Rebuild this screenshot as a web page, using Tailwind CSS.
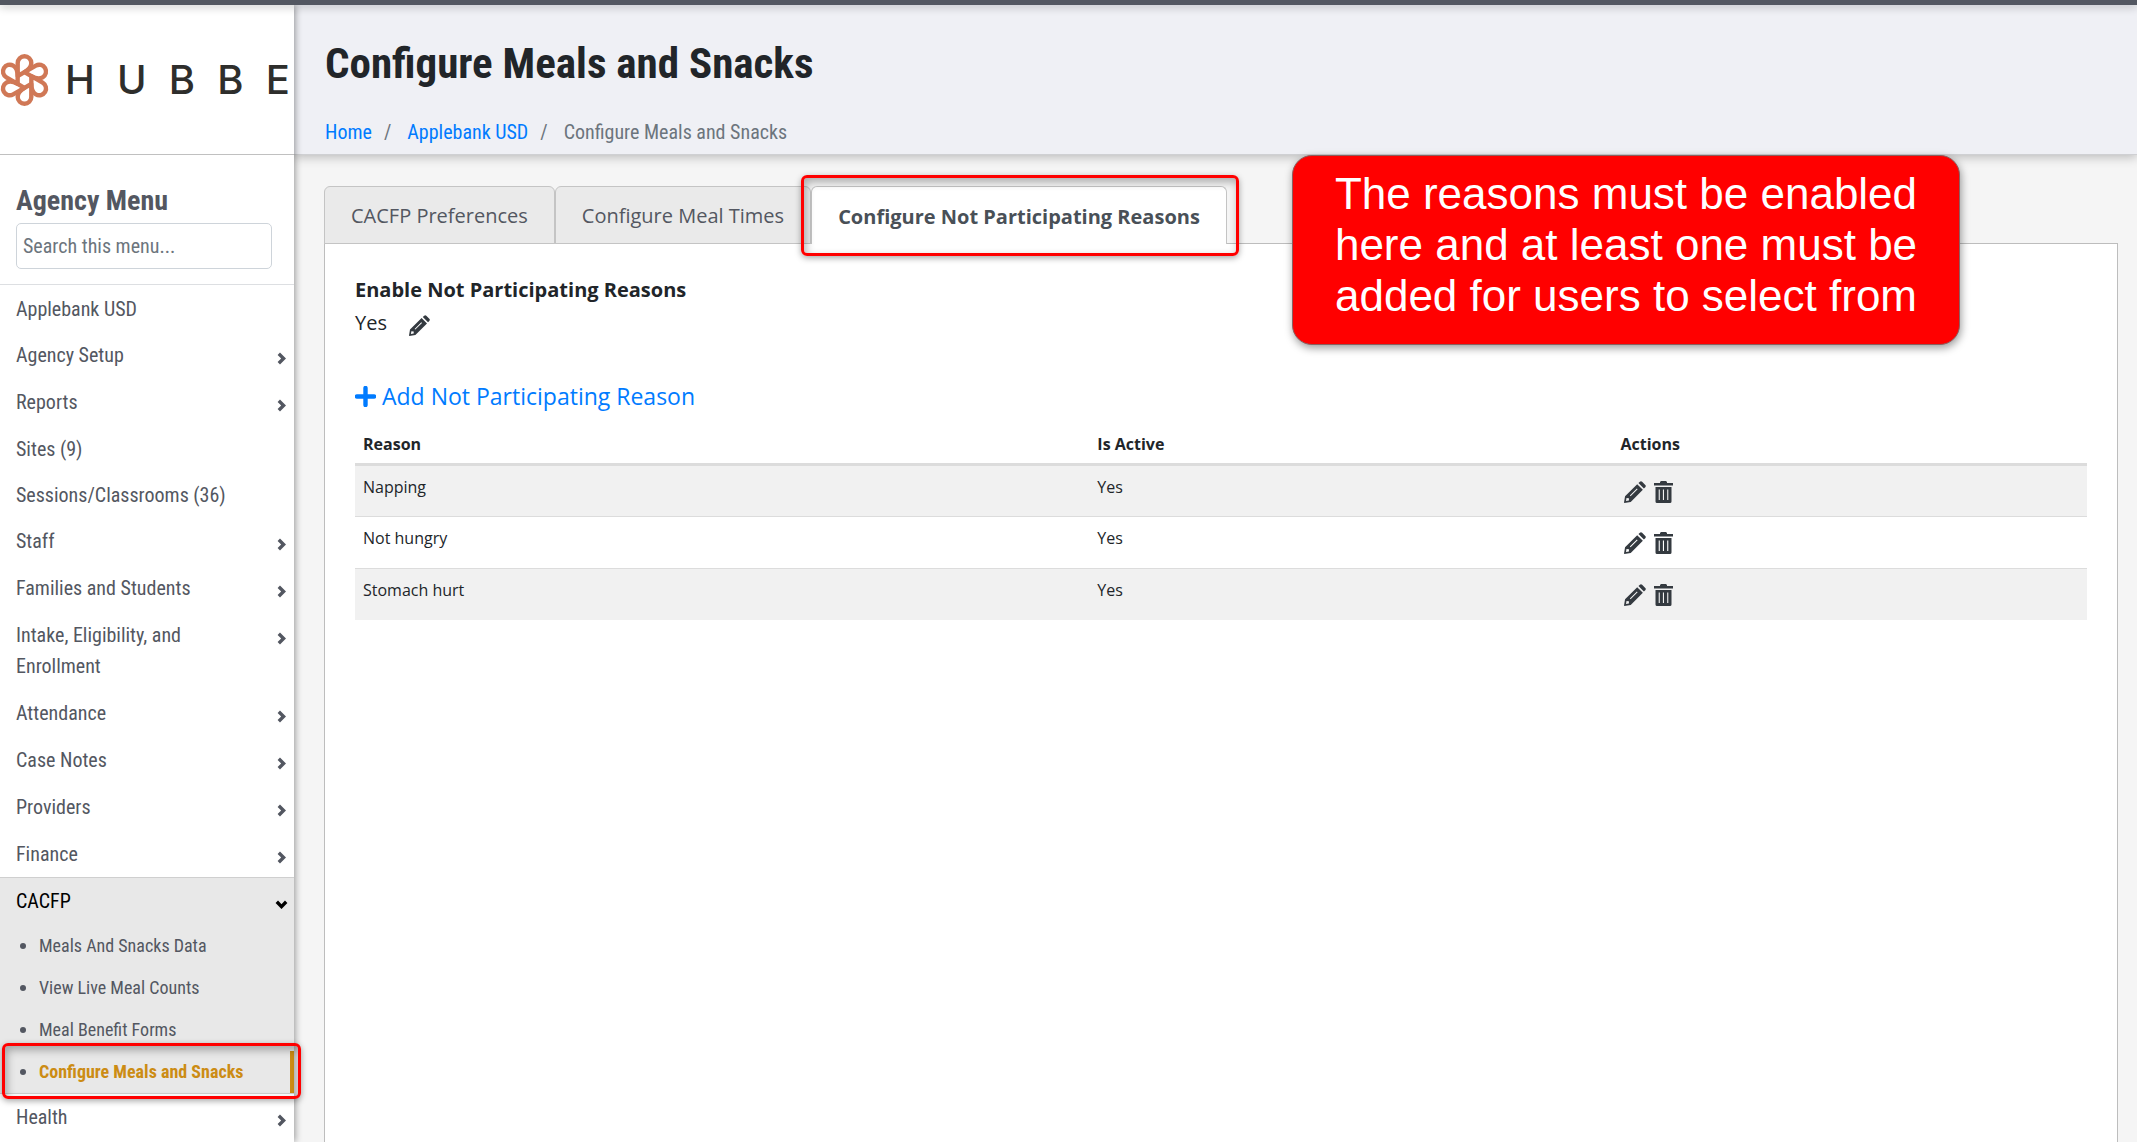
<!DOCTYPE html>
<html lang="en">

<head>
    <meta charset="UTF-8">
    <meta name="viewport" content="width=device-width, initial-scale=1">
    <script src="https://cdn.jsdelivr.net/npm/@tailwindcss/browser@4"></script>
    <title>Configure Meals and Snacks</title>
</head>

<body class="h-screen overflow-hidden flex flex-col bg-[#f5f5f5] text-[#212529] font-['Open_Sans','Noto_Sans',sans-serif]">
    <!-- Icons -->
    <svg class="hidden">
        <symbol id="chevron" viewBox="0 0 9 13">
            <path d="M1.8 1.8 6.6 6.5 1.8 11.2" fill="none" stroke="currentColor" stroke-width="3.4"></path>
        </symbol>
        <symbol id="pencil" viewBox="0 0 21 21">
            <path fill="currentColor" fill-rule="evenodd" d="M12.6 3 18 8.4 6.4 20 0.4 21 0 20.6 1 14.6ZM2.4 16.3 1.9 19.1 4.7 18.6 4.7 16.5 2.4 16.3ZM5.6 13.9 6.3 14.6 13 7.9 12.3 7.2Z"></path>
            <path fill="currentColor" d="M13.8 2 15.2 0.7Q16.2-0.2 17.3 0.7L20.3 3.7Q21.4 4.8 20.3 5.9L19 7.2Z"></path>
        </symbol>
        <symbol id="trash" viewBox="0 0 19 22">
            <path fill="currentColor" d="M6 1 7 0H12L13 1V2H19V4.5H0V2H6Z"></path>
            <path fill="currentColor" fill-rule="evenodd" d="M1.5 6H17.5V20.5Q17.5 22 16 22H3Q1.5 22 1.5 20.5ZM4.7 8.5V19H5.8V8.5ZM8.9 8.5V19H10V8.5ZM13.2 8.5V19H14.3V8.5Z"></path>
        </symbol>
    </svg>

    <div class="h-[5px] shrink-0 bg-[#535761] relative z-20 shadow-[0_2px_8px_rgba(0,0,0,0.25)]"></div>

    <div class="flex flex-1 min-h-0">
        <!-- Sidebar -->
        <aside class="w-[294px] shrink-0 bg-white relative z-10 shadow-[1px_0_7px_rgba(0,0,0,0.4)] text-[#535761] text-[20px] leading-[31px] font-['Roboto_Condensed',Roboto,sans-serif]">
            <div class="h-[150px] border-b border-[#c0c0c0] flex items-center">
                <svg class="w-[49px] h-[64px] shrink-0" viewBox="0 0 49 64">
                    <g fill="none" stroke="#d07856" stroke-width="4.4" stroke-linejoin="round">
                        <path d="M17.7 28V15A6.8 6.8 0 0 1 31.3 15C31.3 19.5 28.5 21.8 24.5 24.1Z"></path>
                        <path transform="rotate(60 24.5 32)" d="M17.7 28V15A6.8 6.8 0 0 1 31.3 15C31.3 19.5 28.5 21.8 24.5 24.1Z"></path>
                        <path transform="rotate(120 24.5 32)" d="M17.7 28V15A6.8 6.8 0 0 1 31.3 15C31.3 19.5 28.5 21.8 24.5 24.1Z"></path>
                        <path transform="rotate(180 24.5 32)" d="M17.7 28V15A6.8 6.8 0 0 1 31.3 15C31.3 19.5 28.5 21.8 24.5 24.1Z"></path>
                        <path transform="rotate(240 24.5 32)" d="M17.7 28V15A6.8 6.8 0 0 1 31.3 15C31.3 19.5 28.5 21.8 24.5 24.1Z"></path>
                        <path transform="rotate(300 24.5 32)" d="M17.7 28V15A6.8 6.8 0 0 1 31.3 15C31.3 19.5 28.5 21.8 24.5 24.1Z"></path>
                    </g>
                </svg>
                <div class="ml-4 mr-1 flex-1 flex justify-between text-[40px] leading-none font-medium text-[#2e2e2c] font-[Inter,sans-serif]">
                    <span>H</span><span>U</span><span>B</span><span>B</span><span>E</span>
                </div>
            </div>

            <div class="px-4 pt-7 pb-[15px] border-b border-[#dddfe2]">
                <h2><label for="menuSearch" class="block text-[28px] leading-[36px] font-bold mb-1">Agency Menu</label></h2>
                <input id="menuSearch" type="text" placeholder="Search this menu..." class="block w-[256px] h-[46px] px-[6px] border border-[#ced4da] rounded-[5px] placeholder:text-[#6c757d]">
            </div>

            <nav class="pt-px">
                <ul>
                    <li><a href="#" class="block px-4 pt-2 pb-[7px]">Applebank USD</a></li>
                    <li><a href="#" class="flex justify-between px-4 py-2 pr-2"><span class="w-[200px]">Agency Setup</span><svg class="w-[9px] h-[13px] mt-3"><use href="#chevron"></use></svg></a></li>
                    <li><a href="#" class="flex justify-between px-4 py-2 pr-2"><span class="w-[200px]">Reports</span><svg class="w-[9px] h-[13px] mt-3"><use href="#chevron"></use></svg></a></li>
                    <li><a href="#" class="block px-4 pt-2 pb-[7px]">Sites (9)</a></li>
                    <li><a href="#" class="block px-4 pt-2 pb-[7px]">Sessions/Classrooms (36)</a></li>
                    <li><a href="#" class="flex justify-between px-4 py-2 pr-2"><span class="w-[200px]">Staff</span><svg class="w-[9px] h-[13px] mt-3"><use href="#chevron"></use></svg></a></li>
                    <li><a href="#" class="flex justify-between px-4 py-2 pr-2"><span class="w-[200px]">Families and Students</span><svg class="w-[9px] h-[13px] mt-3"><use href="#chevron"></use></svg></a></li>
                    <li><a href="#" class="flex justify-between px-4 py-2 pr-2"><span class="w-[200px]">Intake, Eligibility, and Enrollment</span><svg class="w-[9px] h-[13px] mt-3"><use href="#chevron"></use></svg></a></li>
                    <li><a href="#" class="flex justify-between px-4 py-2 pr-2"><span class="w-[200px]">Attendance</span><svg class="w-[9px] h-[13px] mt-3"><use href="#chevron"></use></svg></a></li>
                    <li><a href="#" class="flex justify-between px-4 py-2 pr-2"><span class="w-[200px]">Case Notes</span><svg class="w-[9px] h-[13px] mt-3"><use href="#chevron"></use></svg></a></li>
                    <li><a href="#" class="flex justify-between px-4 py-2 pr-2"><span class="w-[200px]">Providers</span><svg class="w-[9px] h-[13px] mt-3"><use href="#chevron"></use></svg></a></li>
                    <li><a href="#" class="flex justify-between px-4 pt-2 pb-[7px] pr-2"><span class="w-[200px]">Finance</span><svg class="w-[9px] h-[13px] mt-3"><use href="#chevron"></use></svg></a></li>
                    <li class="bg-[#e8e8e8] border-y border-[#cfcfcf]">
                        <a href="#" class="flex justify-between px-4 py-2 pr-2 text-black"><span class="w-[200px]">CACFP</span><svg class="w-[9px] h-[13px] mt-3 rotate-90"><use href="#chevron"></use></svg></a>
                        <ul class="text-[18px] leading-[42px]">
                            <li><a href="#" class="flex items-center pl-5"><span class="w-[6px] h-[6px] rounded-full bg-[#535761] mr-[13px]"></span>Meals And Snacks Data</a></li>
                            <li><a href="#" class="flex items-center pl-5"><span class="w-[6px] h-[6px] rounded-full bg-[#535761] mr-[13px]"></span>View Live Meal Counts</a></li>
                            <li><a href="#" class="flex items-center pl-5"><span class="w-[6px] h-[6px] rounded-full bg-[#535761] mr-[13px]"></span>Meal Benefit Forms</a></li>
                            <li class="relative">
                                <a href="#" class="flex items-center pl-5 border-r-4 border-[#cc8c14] text-[#cc8c14] font-bold"><span class="w-[6px] h-[6px] rounded-full bg-[#535761] mr-[13px]"></span>Configure Meals and Snacks</a>
                                <div class="absolute -top-2 -bottom-[6px] left-[2px] -right-[7px] border-[3px] border-[#ff0000] rounded-[6px] shadow-[0_2px_6px_rgba(0,0,0,0.35),inset_2px_4px_8px_rgba(0,0,0,0.3)] pointer-events-none"></div>
                            </li>
                        </ul>
                    </li>
                    <li><a href="#" class="flex justify-between px-4 py-2 pr-2"><span class="w-[200px]">Health</span><svg class="w-[9px] h-[13px] mt-3"><use href="#chevron"></use></svg></a></li>
                </ul>
            </nav>
        </aside>

        <main class="flex-1 min-w-0 flex flex-col relative">
            <header class="h-[150px] shrink-0 bg-[#eff0f5] border-b border-[#cfd0d3] shadow-[0_2px_10px_rgba(0,0,0,0.25)] px-[31px] pt-7 font-['Roboto_Condensed',Roboto,sans-serif]">
                <h1 class="text-[43px] leading-[60px] font-bold">Configure Meals and Snacks</h1>
                <ol class="flex gap-3 mt-6 text-[20px] leading-[30px] text-[#6c757d]">
                    <li><a href="#" class="text-[#007bff]">Home</a></li>
                    <li class="flex gap-4"><span>/</span><a href="#" class="text-[#007bff]">Applebank USD</a></li>
                    <li class="flex gap-4"><span>/</span>Configure Meals and Snacks</li>
                </ol>
            </header>

            <div class="flex-1 flex flex-col pl-[30px] pr-[19px] pt-[31px]">
                <!-- Tabs -->
                <div class="flex relative z-10 -mb-px text-[20px] leading-[30px] text-[#535761]">
                    <button class="h-[58px] px-[26px] pt-[2px] bg-[#eaeaea] border border-[#c4c4c4] rounded-t-[6px]">CACFP Preferences</button>
                    <button class="h-[58px] px-[26px] pt-[2px] bg-[#eaeaea] border border-[#c4c4c4] rounded-t-[6px]">Configure Meal Times</button>
                    <div class="relative">
                        <button class="h-[58px] px-[26px] pt-[2px] bg-white border border-b-0 border-[#c4c4c4] rounded-t-[6px] font-bold text-[#495057]">Configure Not Participating Reasons</button>
                        <div class="absolute -top-[11px] -bottom-3 -left-[10px] -right-3 border-[3px] border-[#ff0000] rounded-[6px] shadow-[0_2px_6px_rgba(0,0,0,0.35),inset_2px_4px_8px_rgba(0,0,0,0.3)] pointer-events-none"></div>
                    </div>
                </div>

                <section class="flex-1 bg-white border border-b-0 border-[#bdbdbd] px-[30px] pt-[30px]">
                    <h3 class="text-[20px] leading-[32px] font-bold">Enable Not Participating Reasons</h3>
                    <div class="flex items-center gap-[22px] text-[20px] leading-[34px]">
                        Yes
                        <button aria-label="Edit" class="text-[#343a40]"><svg class="w-[21px] h-[21px] mt-1"><use href="#pencil"></use></svg></button>
                    </div>
                    <a href="#" class="mt-[39px] inline-flex items-center gap-[6px] text-[23px] leading-[34px] text-[#007bff]">
                        <svg class="w-[21px] h-[21px]" viewBox="0 0 21 21"><path d="M10.5 2V19M2 10.5H19" stroke="currentColor" stroke-width="4.4" stroke-linecap="round"></path></svg>
                        Add Not Participating Reason
                    </a>

                    <table class="w-full mt-[18px] table-fixed text-[16px] leading-[26px] text-left">
                        <thead>
                            <tr class="h-[33px] border-b-[3px] border-[#dcdcdc] align-top">
                                <th class="w-[42.4%] px-2">Reason</th>
                                <th class="w-[30.2%] px-2">Is Active</th>
                                <th class="px-2">Actions</th>
                            </tr>
                        </thead>
                        <tbody class="align-top">
                            <tr class="h-[52px] bg-[#f1f1f1] border-b border-[#dcdcdc]">
                                <td class="px-2 pt-2">Napping</td>
                                <td class="px-2 pt-2">Yes</td>
                                <td class="px-3 pt-[15px]">
                                    <div class="flex gap-2 text-[#343a40]">
                                        <button aria-label="Edit"><svg class="w-[22px] h-[22px]"><use href="#pencil"></use></svg></button>
                                        <button aria-label="Delete"><svg class="w-[19px] h-[22px]"><use href="#trash"></use></svg></button>
                                    </div>
                                </td>
                            </tr>
                            <tr class="h-[52px] border-b border-[#dcdcdc]">
                                <td class="px-2 pt-2">Not hungry</td>
                                <td class="px-2 pt-2">Yes</td>
                                <td class="px-3 pt-[15px]">
                                    <div class="flex gap-2 text-[#343a40]">
                                        <button aria-label="Edit"><svg class="w-[22px] h-[22px]"><use href="#pencil"></use></svg></button>
                                        <button aria-label="Delete"><svg class="w-[19px] h-[22px]"><use href="#trash"></use></svg></button>
                                    </div>
                                </td>
                            </tr>
                            <tr class="h-[52px] bg-[#f1f1f1]">
                                <td class="px-2 pt-2">Stomach hurt</td>
                                <td class="px-2 pt-2">Yes</td>
                                <td class="px-3 pt-[15px]">
                                    <div class="flex gap-2 text-[#343a40]">
                                        <button aria-label="Edit"><svg class="w-[22px] h-[22px]"><use href="#pencil"></use></svg></button>
                                        <button aria-label="Delete"><svg class="w-[19px] h-[22px]"><use href="#trash"></use></svg></button>
                                    </div>
                                </td>
                            </tr>
                        </tbody>
                    </table>
                </section>
            </div>

            <!-- Callout -->
            <div class="absolute top-[150px] left-[998px] z-20 w-[668px] h-[190px] pt-3 bg-[#ff0000] border border-[#8a6060] rounded-[20px] shadow-[1px_3px_9px_rgba(0,0,0,0.4)] text-white text-center text-[44px] leading-[51px] font-['Liberation_Sans',Arial,sans-serif]">
                The reasons must be enabled<br>here and at least one must be<br>added for users to select from
            </div>
        </main>
    </div>
</body>

</html>
